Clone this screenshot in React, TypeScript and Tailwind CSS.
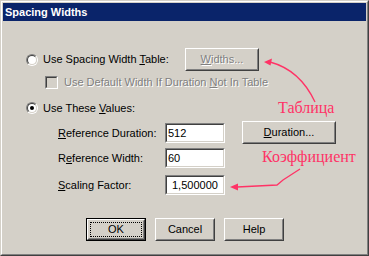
import React from 'react';

const raisedOuter = 'border border-t-white border-l-white border-r-[#404040] border-b-[#404040]';
const raisedInner = 'border border-t-[#d4d0c8] border-l-[#d4d0c8] border-r-[#808080] border-b-[#808080]';
const sunkenOuter = 'border border-t-[#808080] border-l-[#808080] border-r-white border-b-white';
const sunkenInner = 'border border-t-[#404040] border-l-[#404040] border-r-[#d4d0c8] border-b-[#d4d0c8]';
const etched = 'text-[#808080] [text-shadow:1px_1px_0_#ffffff]';

function Radio({ checked }: { checked?: boolean }) {
  return (
    <span className={`block w-[12px] h-[12px] shrink-0 rounded-full ${sunkenOuter}`}>
      <span className={`flex w-full h-full items-center justify-center rounded-full bg-white ${sunkenInner}`}>
        {checked && <span className="block w-[4px] h-[4px] rounded-full bg-black" />}
      </span>
    </span>
  );
}

function Checkbox() {
  return (
    <span className={`block w-[13px] h-[13px] shrink-0 ${sunkenOuter}`}>
      <span className={`block w-full h-full bg-[#d4d0c8] ${sunkenInner}`} />
    </span>
  );
}

function Button({
  children,
  className = '',
  isDefault,
  disabled,
}: {
  children: React.ReactNode;
  className?: string;
  isDefault?: boolean;
  disabled?: boolean;
}) {
  const face = (
    <div className={`h-full ${raisedOuter}`}>
      <div className={`relative flex h-full items-center justify-center ${raisedInner}`}>
        <span className={disabled ? etched : 'text-black'}>{children}</span>
        {isDefault && <span className="absolute inset-[1px] border border-dotted border-black" />}
      </div>
    </div>
  );
  return (
    <div className={`h-[23px] shrink-0 ${className} ${isDefault ? 'border border-black' : ''}`}>
      {face}
    </div>
  );
}

function Field({ value, className = '' }: { value: string; className?: string }) {
  return (
    <div className={`w-[60px] h-[20px] shrink-0 ${sunkenOuter}`}>
      <div className={`flex h-full items-center bg-white pl-[1px] text-black ${sunkenInner} ${className}`}>
        {value}
      </div>
    </div>
  );
}

export default function App() {
  return (
    <div className="relative w-[369px] h-[256px] overflow-hidden bg-[#d4d0c8] font-['Liberation_Sans',Arial,sans-serif] text-[11px] leading-[13px] text-black">
      <div className="h-full border border-t-[#d4d0c8] border-l-[#d4d0c8] border-r-[#404040] border-b-[#404040]">
        <div className="flex h-full flex-col border border-t-white border-l-white border-r-[#808080] border-b-[#808080] p-px">
          {/* Title bar */}
          <div className="flex h-[18px] shrink-0 items-center bg-[#0a246a] pl-[2px] font-bold text-white">
            Spacing Widths
          </div>

          {/* Body */}
          <div className="flex flex-1 flex-col">
            <div className="mt-[27px] flex h-[23px] items-center pl-[23px]">
              <Radio />
              <span className="ml-[5px] w-[142px]">
                Use Spacing Width <u>T</u>able:
              </span>
              <Button disabled className="w-[74px]">
                <u>W</u>idths...
              </Button>
            </div>

            <div className="mt-[5px] flex h-[13px] items-center pl-[42px]">
              <Checkbox />
              <span className={`ml-[6px] ${etched}`}>
                Use Default Width If Duration <u>N</u>ot In Table
              </span>
            </div>

            <div className="mt-[12px] flex h-[14px] items-center pl-[23px]">
              <Radio checked />
              <span className="ml-[5px]">
                Use These <u>V</u>alues:
              </span>
            </div>

            <div className="mt-[6px] flex h-[23px] items-start pl-[55px]">
              <span className="mt-[2px] flex h-[20px] w-[107px] items-center">
                <span>
                  <u>R</u>eference Duration:
                </span>
              </span>
              <div className="mt-[2px]">
                <Field value="512" />
              </div>
              <Button className="ml-[17px] w-[94px]">
                <u>D</u>uration...
              </Button>
            </div>

            <div className="mt-[4px] flex h-[20px] items-center pl-[55px]">
              <span className="w-[107px]">
                R<u>e</u>ference Width:
              </span>
              <Field value="60" />
            </div>

            <div className="mt-[7px] flex h-[20px] items-center pl-[55px]">
              <span className="w-[107px]">
                <u>S</u>caling Factor:
              </span>
              <Field value="1,500000" className="pl-[5px]" />
            </div>

            <div className="mt-[23px] flex gap-[9px] pl-[83px]">
              <Button isDefault className="w-[60px]">
                OK
              </Button>
              <Button className="w-[60px]">Cancel</Button>
              <Button className="w-[60px]">Help</Button>
            </div>
          </div>
        </div>
      </div>

      {/* Annotations drawn over the dialog */}
      <svg
        className="pointer-events-none absolute inset-0"
        width="369"
        height="256"
        viewBox="0 0 369 256"
      >
        <path d="M315 102 Q 300 70 270 62" fill="none" stroke="#ff3366" strokeWidth="1.3" />
        <polygon points="264,62 272,58.5 270.5,65.5" fill="#ff3366" />
        <path d="M300 169 L283 180 L277 185 L257 186 L237 187" fill="none" stroke="#ff3366" strokeWidth="1.3" />
        <polygon points="230,187 238,183.5 238,190.5" fill="#ff3366" />
      </svg>
      <span className="absolute left-[278px] top-[100px] font-['Liberation_Serif','Times_New_Roman',serif] text-[16px] leading-[16px] text-[#ff3366]">
        Таблица
      </span>
      <span className="absolute left-[262px] top-[149px] font-['Liberation_Serif','Times_New_Roman',serif] text-[16px] leading-[16px] text-[#ff3366]">
        Коэффициент
      </span>
    </div>
  );
}
